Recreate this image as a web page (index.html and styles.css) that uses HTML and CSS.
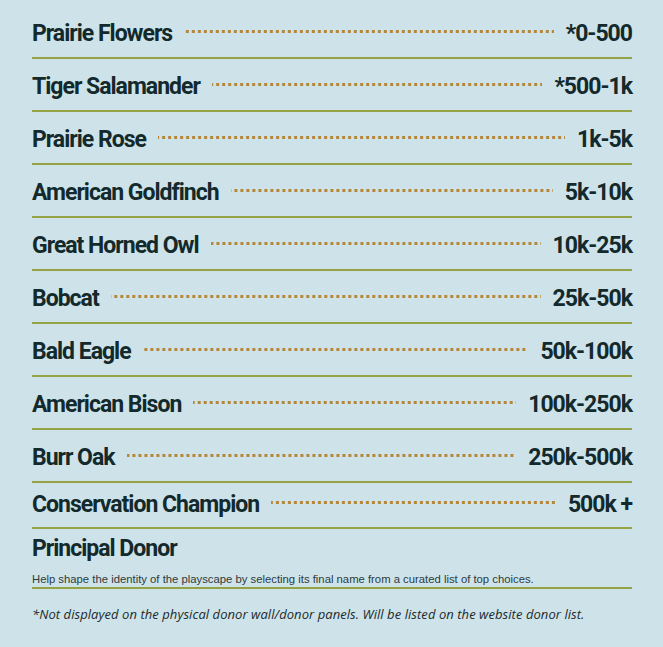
FILE: index.html
```html
<!DOCTYPE html>
<html>
<head>
<meta charset="utf-8">
<link rel="stylesheet" href="styles.css">
</head>
<body>
<div class="wrap">
  <div class="row"><span class="name">Prairie Flowers</span><span class="leader"></span><span class="amt">*0-500</span></div>
  <div class="row"><span class="name">Tiger Salamander</span><span class="leader"></span><span class="amt">*500-1k</span></div>
  <div class="row"><span class="name">Prairie Rose</span><span class="leader"></span><span class="amt">1k-5k</span></div>
  <div class="row"><span class="name">American Goldfinch</span><span class="leader"></span><span class="amt">5k-10k</span></div>
  <div class="row"><span class="name">Great Horned Owl</span><span class="leader"></span><span class="amt">10k-25k</span></div>
  <div class="row"><span class="name">Bobcat</span><span class="leader"></span><span class="amt">25k-50k</span></div>
  <div class="row"><span class="name">Bald Eagle</span><span class="leader"></span><span class="amt">50k-100k</span></div>
  <div class="row"><span class="name">American Bison</span><span class="leader"></span><span class="amt">100k-250k</span></div>
  <div class="row"><span class="name">Burr Oak</span><span class="leader"></span><span class="amt">250k-500k</span></div>
  <div class="row row-short"><span class="name">Conservation Champion</span><span class="leader"></span><span class="amt">500k +</span></div>
  <div class="principal">
    <div class="title">Principal Donor</div>
    <p class="desc">Help shape the identity of the playscape by selecting its final name from a curated list of top choices.</p>
  </div>
  <p class="note">*Not displayed on the physical donor wall/donor panels. Will be listed on the website donor list.</p>
</div>
</body>
</html>
```
FILE: styles.css
```css
html, body {
  margin: 0;
  padding: 0;
  background: #cde3e9;
}
.wrap {
  width: 600px;
  margin-left: 32px;
  padding-top: 6px;
  color: #13292b;
}
.row {
  display: flex;
  align-items: center;
  height: 51px;
  border-bottom: 2px solid #94a343;
}
.row-short {
  height: 39px;
  padding-bottom: 5px;
}
.name, .amt, .title {
  font-family: "Roboto", sans-serif;
  font-weight: 700;
  font-size: 23px;
  letter-spacing: -1px;
  line-height: 23px;
  white-space: nowrap;
}
.name, .amt {
  padding-top: 4px;
}
.leader {
  flex: 1;
  height: 3px;
  margin: 0 12px;
  background-image: linear-gradient(to right, #b5873a 50%, transparent 50%);
  background-size: 6px 3px;
  background-repeat: repeat;
  background-attachment: fixed;
}
.principal {
  padding-top: 8px;
  border-bottom: 2px solid #94a343;
}
.desc {
  margin: 13px 0 0;
  padding-bottom: 1px;
  font-family: "Liberation Sans", sans-serif;
  font-size: 11.3px;
  line-height: 13px;
  color: #2f3a3c;
}
.note {
  margin: 16px 0 0;
  font-family: "Open Sans", sans-serif;
  font-style: italic;
  font-size: 13px;
  letter-spacing: 0.06px;
  color: #1c2a2c;
}
```
